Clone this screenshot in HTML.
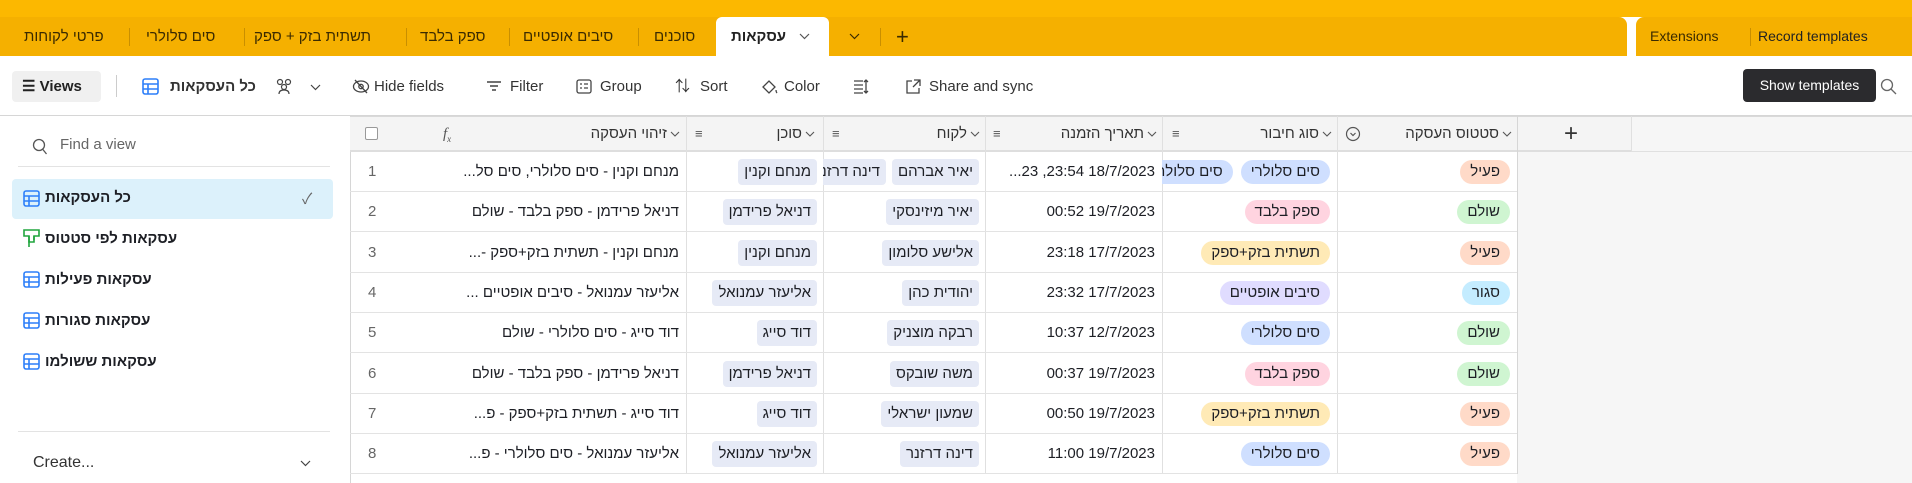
<!DOCTYPE html>
<html><head><meta charset="utf-8"><style>
*{box-sizing:border-box;margin:0;padding:0}
body{width:1912px;height:483px;overflow:hidden;font-family:"Liberation Sans","Noto Sans CJK SC",sans-serif;font-size:15px;color:#1d1f25;background:#fff;position:relative}
.abs{position:absolute}
.top{left:0;top:0;width:1912px;height:17px;background:#fcb800}
.tabbar{left:0;top:17px;width:1627px;height:39px;background:#f5b000;border-radius:0 8px 0 0}
.tabbar2{left:1636px;top:17px;width:276px;height:39px;background:#f5b000;border-radius:8px 0 0 0}
.tab{position:absolute;top:17px;height:39px;line-height:39px;font-size:15px;color:#3a2a00;white-space:nowrap}
.sep{position:absolute;width:1px;height:18px;background:#c98f00}
.tool{position:absolute;top:71px;height:31px;line-height:31px;font-size:15px;color:#333;white-space:nowrap}
.hdr{left:350px;top:116px;width:1282px;height:36px;background:#f4f4f4;border-top:1px solid #d9d9d9;border-bottom:2px solid #dedede}
.vline{position:absolute;width:1px;background:#e0e0e0}
.hcell{position:absolute;top:116px;height:36px;line-height:36px;font-size:15px;color:#333;direction:rtl;white-space:nowrap}
.row{position:absolute;left:350px;width:1167px;height:40px;border-bottom:1px solid #e3e3e3}
.cell{position:absolute;height:40px;line-height:40px;direction:rtl;white-space:nowrap;overflow:hidden}
.pill{display:inline-block;height:24px;line-height:24px;border-radius:12px;padding:0 10px;font-size:15px;vertical-align:middle}
.chip{display:inline-block;height:26px;line-height:26px;border-radius:4px;padding:0 6px;background:#e6eaf6;font-size:15px;vertical-align:middle;margin-left:6px}
.side{position:absolute;left:45px;font-size:15px;direction:rtl;white-space:nowrap}
.chev{display:inline-block;vertical-align:middle;margin-left:3px}
</style></head><body>
<div class="abs top"></div>
<div class="abs tabbar"></div>
<div class="abs tabbar2"></div>
<div class="abs" style="left:716px;top:17px;width:113px;height:39px;background:#fff;border-radius:6px 6px 0 0"></div>

<div class="tab" style="left:24px">פרטי לקוחות</div><div class="sep" style="left:129px;top:28px"></div>
<div class="tab" style="left:146px">סים סלולרי</div><div class="sep" style="left:244px;top:28px"></div>
<div class="tab" style="left:254px">תשתית בזק + ספק</div><div class="sep" style="left:406px;top:28px"></div>
<div class="tab" style="left:420px">ספק בלבד</div><div class="sep" style="left:509px;top:28px"></div>
<div class="tab" style="left:523px">סיבים אופטיים</div><div class="sep" style="left:638px;top:28px"></div>
<div class="tab" style="left:654px">סוכנים</div>
<div class="tab" style="left:731px;font-weight:bold;color:#222">עסקאות</div>
<svg class="abs" style="left:799px;top:33px" width="11" height="7"><path d="M1 1l4.5 4.5L10 1" fill="none" stroke="#555" stroke-width="1.2"/></svg>
<svg class="abs" style="left:849px;top:33px" width="11" height="7"><path d="M1 1l4.5 4.5L10 1" fill="none" stroke="#3a2a00" stroke-width="1.2"/></svg>
<div class="sep" style="left:880px;top:28px"></div>
<div class="tab" style="left:896px;font-size:22px;font-weight:300">+</div>
<div class="tab" style="left:1650px;font-size:14px">Extensions</div><div class="sep" style="left:1750px;top:28px"></div>
<div class="tab" style="left:1758px;font-size:14px;color:#222">Record templates</div>

<!-- toolbar -->
<div class="abs" style="left:12px;top:71px;width:89px;height:31px;background:#f0f0f0;border-radius:4px"></div>
<div class="tool" style="left:22px;font-weight:bold;color:#222">&#9776; Views</div>
<div class="abs" style="left:116px;top:75px;width:1px;height:22px;background:#ccc"></div>
<svg class="abs" style="left:142px;top:78px" width="17" height="17" viewBox="0 0 17 17"><rect x="1" y="1" width="15" height="15" rx="2" fill="none" stroke="#2d7ff9" stroke-width="1.6"/><path d="M1 6h15M1 11h15M6 6v10" stroke="#2d7ff9" stroke-width="1.6"/></svg>
<div class="tool" style="left:170px;font-weight:bold;direction:rtl">כל העסקאות</div>
<svg class="abs" style="left:274px;top:77px" width="20" height="18"><circle cx="6" cy="5" r="2.5" fill="none" stroke="#444" stroke-width="1.2"/><circle cx="14" cy="5" r="2.5" fill="none" stroke="#444" stroke-width="1.2"/><circle cx="10" cy="10" r="2.5" fill="none" stroke="#444" stroke-width="1.2"/><path d="M5 17c0-3 2-4 5-4s5 1 5 4" fill="none" stroke="#444" stroke-width="1.2"/></svg>
<svg class="abs" style="left:310px;top:84px" width="11" height="7"><path d="M1 1l4.5 4.5L10 1" fill="none" stroke="#444" stroke-width="1.2"/></svg>
<svg class="abs" style="left:352px;top:79px" width="18" height="15" viewBox="0 0 18 15"><ellipse cx="9" cy="7.5" rx="7.5" ry="5.5" fill="none" stroke="#444" stroke-width="1.3"/><circle cx="9" cy="7.5" r="2.2" fill="none" stroke="#444" stroke-width="1.3"/><path d="M3 1l12 13" stroke="#444" stroke-width="1.3"/></svg>
<div class="tool" style="left:374px">Hide fields</div>
<svg class="abs" style="left:486px;top:80px" width="16" height="12"><path d="M1 2h14M4 6h8M6 10h4" stroke="#444" stroke-width="1.4"/></svg>
<div class="tool" style="left:510px">Filter</div>
<svg class="abs" style="left:576px;top:79px" width="16" height="15"><rect x="1" y="1" width="14" height="13" rx="2" fill="none" stroke="#444" stroke-width="1.3"/><path d="M4 5h2M8 5h4M4 9h2M8 9h4" stroke="#444" stroke-width="1.3"/></svg>
<div class="tool" style="left:600px">Group</div>
<div class="tool" style="left:675px;font-size:15px">&#8645;</div>
<div class="tool" style="left:700px">Sort</div>
<svg class="abs" style="left:760px;top:78px" width="18" height="18"><path d="M3 9l6-6 6 6-6 6z" fill="none" stroke="#444" stroke-width="1.3"/><path d="M16 12c0 2 1 3 1 3" stroke="#444" stroke-width="1.3"/></svg>
<div class="tool" style="left:784px">Color</div>
<svg class="abs" style="left:853px;top:79px" width="16" height="15"><path d="M1 2h9M1 6h9M1 10h9M1 14h9M13 1v13M11 3l2-2 2 2M11 12l2 2 2-2" stroke="#444" stroke-width="1.3" fill="none"/></svg>
<svg class="abs" style="left:905px;top:79px" width="16" height="16"><path d="M7 2H2v12h12V9M9 1h6v6M15 1L8 8" stroke="#444" stroke-width="1.3" fill="none"/></svg>
<div class="tool" style="left:929px">Share and sync</div>
<div class="abs" style="left:1743px;top:69px;width:133px;height:33px;background:#2b2b2e;border-radius:4px;color:#fff;font-size:14px;line-height:33px;text-align:center">Show templates</div>
<svg class="abs" style="left:1880px;top:78px" width="17" height="17"><circle cx="7" cy="7" r="5.5" fill="none" stroke="#666" stroke-width="1.3"/><path d="M11 11l5 5" stroke="#666" stroke-width="1.3"/></svg>

<!-- divider -->
<div class="abs" style="left:0;top:115px;width:1912px;height:1px;background:#d6d6d6"></div>
<div class="abs" style="left:350px;top:115px;width:1px;height:368px;background:#d6d6d6"></div>

<!-- sidebar -->
<svg class="abs" style="left:32px;top:138px" width="16" height="17"><circle cx="7" cy="7" r="5.5" fill="none" stroke="#555" stroke-width="1.3"/><path d="M10.5 11l4 5" stroke="#555" stroke-width="1.3"/></svg>
<div class="abs" style="left:60px;top:136px;font-size:15px;color:#666">Find a view</div>
<div class="abs" style="left:18px;top:166px;width:312px;height:1px;background:#e3e3e3"></div>
<div class="abs" style="left:12px;top:179px;width:321px;height:40px;background:#dcf1fb;border-radius:4px"></div>
<div class="abs" style="left:302px;top:188px;color:#666;font-size:15px">&#10003;</div>
<svg class="abs" style="left:23px;top:190px" width="17" height="17"><rect x="1" y="1" width="15" height="15" rx="2" fill="none" stroke="#2d7ff9" stroke-width="1.6"/><path d="M1 6h15M1 11h15M6 6v10" stroke="#2d7ff9" stroke-width="1.6"/></svg>
<div class="side" style="top:189px;font-weight:bold">כל העסקאות</div>
<svg class="abs" style="left:23px;top:229px" width="17" height="19"><path d="M1 1h15v6H11v6H6V7H1z" fill="none" stroke="#20a53e" stroke-width="1.6"/><path d="M6 7v11M11 7v4" stroke="#20a53e" stroke-width="1.6"/></svg>
<div class="side" style="top:230px;font-weight:bold">עסקאות לפי סטטוס</div>
<svg class="abs" style="left:23px;top:271px" width="17" height="17"><rect x="1" y="1" width="15" height="15" rx="2" fill="none" stroke="#2d7ff9" stroke-width="1.6"/><path d="M1 6h15M1 11h15M6 6v10" stroke="#2d7ff9" stroke-width="1.6"/></svg>
<div class="side" style="top:271px;font-weight:bold">עסקאות פעילות</div>
<svg class="abs" style="left:23px;top:312px" width="17" height="17"><rect x="1" y="1" width="15" height="15" rx="2" fill="none" stroke="#2d7ff9" stroke-width="1.6"/><path d="M1 6h15M1 11h15M6 6v10" stroke="#2d7ff9" stroke-width="1.6"/></svg>
<div class="side" style="top:312px;font-weight:bold">עסקאות סגורות</div>
<svg class="abs" style="left:23px;top:353px" width="17" height="17"><rect x="1" y="1" width="15" height="15" rx="2" fill="none" stroke="#2d7ff9" stroke-width="1.6"/><path d="M1 6h15M1 11h15M6 6v10" stroke="#2d7ff9" stroke-width="1.6"/></svg>
<div class="side" style="top:353px;font-weight:bold">עסקאות ששולמו</div>
<div class="abs" style="left:18px;top:431px;width:312px;height:1px;background:#e3e3e3"></div>
<div class="abs" style="left:33px;top:454px;font-size:16px;color:#333">Create...</div>
<svg class="abs" style="left:300px;top:460px" width="11" height="7"><path d="M1 1l4.5 4.5L10 1" fill="none" stroke="#444" stroke-width="1.2"/></svg>

<!-- grid gray area -->
<div class="abs" style="left:1517px;top:152px;width:395px;height:331px;background:#f6f6f6"></div>
<div class="abs" style="left:1632px;top:116px;width:280px;height:36px;background:#f6f6f6;border-top:1px solid #d9d9d9;border-bottom:1px solid #e0e0e0"></div>
<div class="abs hdr"></div>

<!-- header -->
<div class="abs" style="left:365px;top:127px;width:13px;height:13px;border:1px solid #999;border-radius:2px;background:#fff"></div>
<div class="hcell" style="left:443px;font-style:italic;font-family:'Liberation Serif',serif;color:#555;direction:ltr">f<sub style="font-size:9px">x</sub></div>
<div class="hcell" style="left:540px;width:140px;text-align:right"><svg class="chev" width="10" height="6"><path d="M1 1l4 4 4-4" fill="none" stroke="#555" stroke-width="1.1"/></svg>זיהוי העסקה</div>
<div class="hcell" style="left:695px;color:#555;direction:ltr;font-size:13px">&#8801;</div>
<div class="hcell" style="left:735px;width:80px;text-align:right"><svg class="chev" width="10" height="6"><path d="M1 1l4 4 4-4" fill="none" stroke="#555" stroke-width="1.1"/></svg>סוכן</div>
<div class="hcell" style="left:832px;color:#555;direction:ltr;font-size:13px">&#8801;</div>
<div class="hcell" style="left:890px;width:90px;text-align:right"><svg class="chev" width="10" height="6"><path d="M1 1l4 4 4-4" fill="none" stroke="#555" stroke-width="1.1"/></svg>לקוח</div>
<div class="hcell" style="left:993px;color:#555;direction:ltr;font-size:13px">&#8801;</div>
<div class="hcell" style="left:1020px;width:137px;text-align:right"><svg class="chev" width="10" height="6"><path d="M1 1l4 4 4-4" fill="none" stroke="#555" stroke-width="1.1"/></svg>תאריך הזמנה</div>
<div class="hcell" style="left:1172px;color:#555;direction:ltr;font-size:13px">&#8801;</div>
<div class="hcell" style="left:1210px;width:122px;text-align:right"><svg class="chev" width="10" height="6"><path d="M1 1l4 4 4-4" fill="none" stroke="#555" stroke-width="1.1"/></svg>סוג חיבור</div>
<svg class="abs" style="left:1345px;top:126px" width="16" height="16"><circle cx="8" cy="8" r="6.5" fill="none" stroke="#555" stroke-width="1.2"/><path d="M5.5 7l2.5 2.5L10.5 7" fill="none" stroke="#555" stroke-width="1.2"/></svg>
<div class="hcell" style="left:1365px;width:147px;text-align:right"><svg class="chev" width="10" height="6"><path d="M1 1l4 4 4-4" fill="none" stroke="#555" stroke-width="1.1"/></svg>סטטוס העסקה</div>
<div class="hcell" style="left:1564px;font-size:24px;font-weight:300;color:#333;direction:ltr">+</div>

<!-- vertical lines -->
<div class="vline" style="left:686px;top:116px;height:358px"></div>
<div class="vline" style="left:823px;top:116px;height:358px"></div>
<div class="vline" style="left:985px;top:116px;height:358px"></div>
<div class="vline" style="left:1162px;top:116px;height:358px"></div>
<div class="vline" style="left:1337px;top:116px;height:358px"></div>
<div class="vline" style="left:1517px;top:116px;height:358px;background:#d6d6d6"></div>
<div class="vline" style="left:1631px;top:116px;height:36px"></div>

<!-- rows -->
<div id="rows"></div>
<script>
var P={act:['פעיל','#ffdac8'],paid:['שולם','#cff5d1'],closed:['סגור','#c4ecff']};
var T={sim:['סים סלולרי','#cfdfff'],sp:['ספק בלבד','#ffd4e0'],bz:['תשתית בזק+ספק','#ffeab6'],fb:['סיבים אופטיים','#e0dcff']};
var R=[
['מנחם וקנין - סים סלולרי, סים סל...','מנחם וקנין','יאיר אברהם','...23 ,23:54 18/7/2023','sim2','act'],
['דניאל פרידמן - ספק בלבד - שולם','דניאל פרידמן','יאיר מיזינסקי','00:52 19/7/2023','sp','paid'],
['מנחם וקנין - תשתית בזק+ספק -...','מנחם וקנין','אלישע סלומון','23:18 17/7/2023','bz','act'],
['אליעזר עמנואל - סיבים אופטיים ...','אליעזר עמנואל','יהודית כהן','23:32 17/7/2023','fb','closed'],
['דוד סייג - סים סלולרי - שולם','דוד סייג','רבקה מוצניק','10:37 12/7/2023','sim','paid'],
['דניאל פרידמן - ספק בלבד - שולם','דניאל פרידמן','משה שובקס','00:37 19/7/2023','sp','paid'],
['דוד סייג - תשתית בזק+ספק - פ...','דוד סייג','שמעון ישראלי','00:50 19/7/2023','bz','act'],
['אליעזר עמנואל - סים סלולרי - פ...','אליעזר עמנואל','דינה דרזנר','11:00 19/7/2023','sim','act']];
var h='';
R.forEach(function(r,i){
 var top=152+i*40.3;
 h+='<div class="row" style="top:'+top+'px"></div>';
 h+='<div class="cell" style="left:368px;top:'+top+'px;color:#666;direction:ltr">'+(i+1)+'</div>';
 h+='<div class="cell" style="left:433px;width:246px;top:'+top+'px;text-align:right">'+r[0]+'</div>';
 h+='<div class="cell" style="left:686px;width:131px;top:'+top+'px;text-align:right"><span class="chip" style="margin:0">'+r[1]+'</span></div>';
 var c='<span class="chip" style="margin:0">'+r[2]+'</span>';
 if(i==0)c='<span class="chip" style="margin:0 0 0 6px">יאיר אברהם</span><span class="chip" style="margin:0">דינה דרזנר</span>';
 h+='<div class="cell" style="left:823px;width:162px;top:'+top+'px;text-align:right;padding-right:6px">'+c+'</div>';
 h+='<div class="cell" style="left:985px;width:170px;top:'+top+'px;text-align:right;direction:ltr;unicode-bidi:bidi-override">'+r[3]+'</div>';
 var t;
 if(r[4]=='sim2')t='<span class="pill" style="background:#cfdfff;margin-left:8px">סים סלולרי</span><span class="pill" style="background:#cfdfff">סים סלולרי</span>';
 else{var x=T[r[4]];t='<span class="pill" style="background:'+x[1]+'">'+x[0]+'</span>';}
 h+='<div class="cell" style="left:1162px;width:168px;top:'+top+'px;text-align:right">'+t+'</div>';
 var s=P[r[5]];
 h+='<div class="cell" style="left:1337px;width:173px;top:'+top+'px;text-align:right"><span class="pill" style="background:'+s[1]+'">'+s[0]+'</span></div>';
});
document.getElementById('rows').innerHTML=h;
</script>
</body></html>
